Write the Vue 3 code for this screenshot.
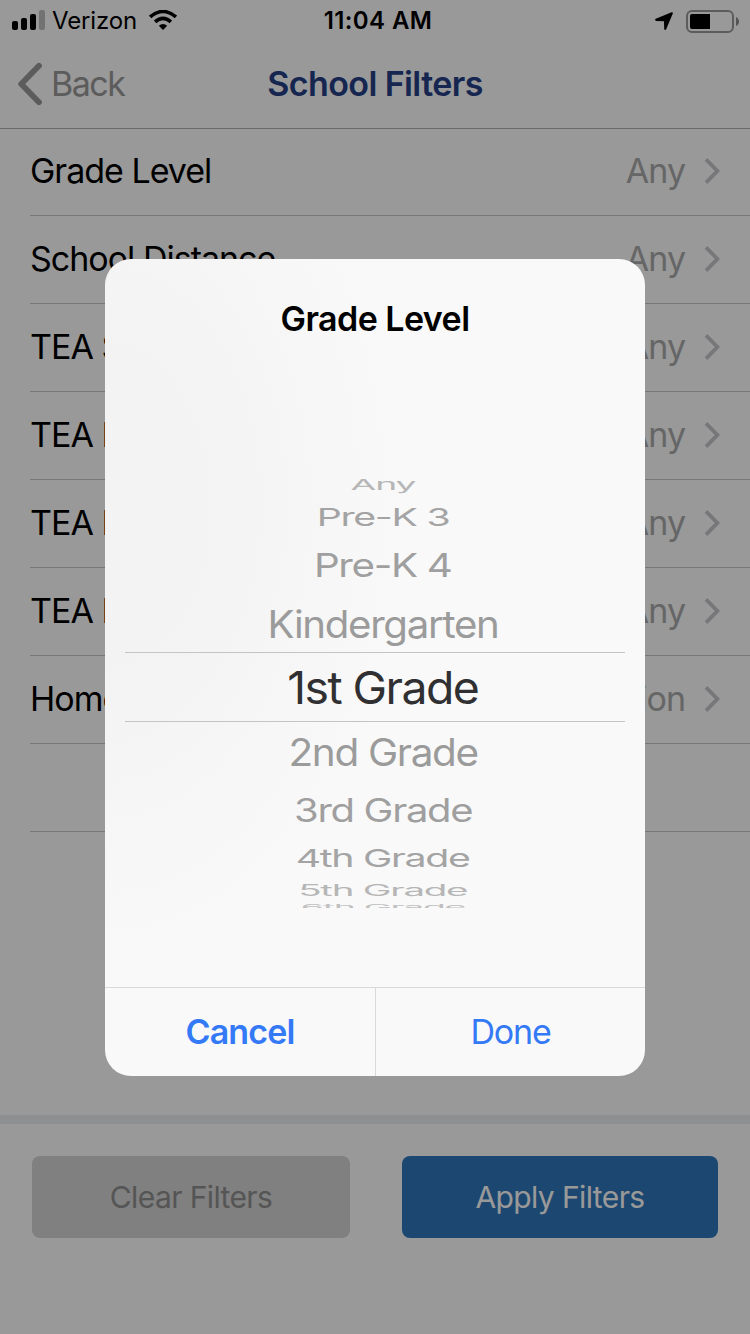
<template>
  <div class="screen">
    <header class="header">
      <div class="status-bar">
        <div class="status-left">
          <svg class="signal" width="33" height="20" viewBox="0 0 33 20">
            <rect x="0" y="11" width="6" height="9" rx="2" />
            <rect x="9" y="8" width="6" height="12" rx="2" />
            <rect x="18" y="4" width="6" height="16" rx="2" />
            <rect x="27" y="0" width="6" height="20" rx="2" fill="#bfbfbf" />
          </svg>
          <span class="carrier">Verizon</span>
          <svg class="wifi" width="28" height="20" viewBox="0 0 28 20">
            <path d="M14 20 L9.8 15.7 Q14 12.2 18.2 15.7 Z" />
            <path d="M6.1 11.9 Q14 4.9 21.9 11.9" fill="none" stroke="#000" stroke-width="3.5" />
            <path d="M1.1 7 Q14 -4 26.9 7" fill="none" stroke="#000" stroke-width="3.6" />
          </svg>
        </div>
        <span class="clock">11:04 AM</span>
        <div class="status-right">
          <svg width="18" height="18" viewBox="0 0 18 18">
            <path d="M16.6 0.2 Q18.2 0 17.8 1.5 L11.2 17.2 Q10.2 18.6 9.2 17.2 L9 9.2 L1 8.9 Q-0.8 7.8 0.8 6.8 Z" />
          </svg>
          <svg class="battery" width="54" height="23" viewBox="0 0 54 23">
            <rect x="1" y="1" width="46" height="21" rx="5" fill="none" stroke="#999" stroke-width="2" />
            <path d="M6 4 H24 V19 H6 Q4 19 4 17 V6 Q4 4 6 4 Z" />
            <path d="M50 7 Q53 8.5 53 11.5 Q53 14.5 50 16 Z" fill="#8c8c8c" />
          </svg>
        </div>
      </div>
      <nav class="nav-bar">
        <button class="back-button">
          <svg width="26" height="44" viewBox="0 0 26 44">
            <path d="M22 3.8 L4.2 22 L22 40.2" fill="none" stroke="currentColor" stroke-width="5.8" stroke-linecap="round" stroke-linejoin="round" />
          </svg>
          <span>Back</span>
        </button>
        <h1 class="nav-title"><span>School Filters</span></h1>
      </nav>
    </header>

    <ul class="filter-list">
      <li v-for="(filter, i) in filters" :key="i" class="filter-row">
        <template v-if="filter.label">
          <span class="filter-label">{{ filter.label }}</span>
          <span class="filter-value">{{ filter.value }}</span>
          <svg class="chevron" width="16" height="28" viewBox="0 0 16 28">
            <path d="M2 2.3 L13.4 14 L2 25.7" fill="none" stroke="#c7c7cc" stroke-width="3.8" />
          </svg>
        </template>
      </li>
    </ul>

    <footer class="actions">
      <button class="action clear"><span>Clear Filters</span></button>
      <button class="action apply"><span>Apply Filters</span></button>
    </footer>

    <div class="backdrop">
      <section class="dialog">
        <h2 class="dialog-title"><span>Grade Level</span></h2>
        <div class="picker">
          <div class="wheel">
            <div
              v-for="(grade, i) in grades"
              :key="grade.label"
              class="wheel-row"
              :class="{ selected: i === selected }"
              :style="{ height: grade.height + 'px' }"
            >
              <span :style="wheelStyle(grade)">{{ grade.label }}</span>
            </div>
          </div>
          <div class="selection"></div>
        </div>
        <div class="dialog-buttons">
          <button class="cancel"><span>Cancel</span></button>
          <button class="done"><span>Done</span></button>
        </div>
      </section>
    </div>
  </div>
</template>

<script setup>
import { ref } from 'vue';

const filters = [
  { label: 'Grade Level', value: 'Any' },
  { label: 'School Distance', value: 'Any' },
  { label: 'TEA School Rating', value: 'Any' },
  { label: 'TEA Distinctions', value: 'Any' },
  { label: 'TEA Recognition', value: 'Any' },
  { label: 'TEA Programs', value: 'Any' },
  { label: 'Home Address', value: 'Location' },
  {}
];

// Rows get flatter the further they are from the middle of the wheel
const grades = [
  { label: 'Any', height: 23.4, sx: 0.83, sy: 0.335, opacity: 0.7 },
  { label: 'Pre-K 3', height: 41, sx: 0.873, sy: 0.55, opacity: 0.9 },
  { label: 'Pre-K 4', height: 53.6, sx: 0.897, sy: 0.73, opacity: 0.95 },
  { label: 'Kindergarten', height: 64.2, sx: 0.895, sy: 0.85, opacity: 1 },
  { label: '1st Grade', height: 65, sx: 1.03, sy: 1, opacity: 1 },
  { label: '2nd Grade', height: 63.2, sx: 0.9, sy: 0.85, opacity: 1 },
  { label: '3rd Grade', height: 54, sx: 0.89, sy: 0.72, opacity: 0.95 },
  { label: '4th Grade', height: 41, sx: 0.873, sy: 0.55, opacity: 0.9 },
  { label: '5th Grade', height: 23.8, sx: 0.856, sy: 0.34, opacity: 0.7 },
  { label: '6th Grade', height: 11.6, sx: 0.83, sy: 0.18, opacity: 0.6 }
];

const selected = ref(4);

const wheelStyle = (grade) => ({
  transform: `scale(${grade.sx}, ${grade.sy})`,
  opacity: grade.opacity
});
</script>

<style>
body {
  margin: 0;
  background: #fff;
}
</style>

<style scoped>
.screen {
  position: relative;
  display: flex;
  flex-direction: column;
  width: 750px;
  height: 1334px;
  overflow: hidden;
  background: #fff;
  color: #000;
  font-family: Inter, "Liberation Sans", sans-serif;
  font-size: 34px;
  line-height: 1.2;
}

button {
  padding: 0;
  border: none;
  background: none;
  font: inherit;
  color: inherit;
}

span {
  white-space: nowrap;
}

.header {
  box-sizing: border-box;
  height: 129px;
  flex: none;
  border-bottom: 1px solid #b2b2b2;
}

.status-bar {
  display: grid;
  grid-template-columns: 312px 132px 1fr;
  align-items: center;
  height: 40px;
  font-size: 24px;
}

.status-left {
  display: flex;
  align-items: center;
  padding-left: 12px;
}

.carrier {
  width: 96px;
  padding-left: 7px;
  box-sizing: border-box;
  margin-top: 2px;
  letter-spacing: -0.15px;
}

.clock {
  text-align: center;
  font-weight: 600;
  margin-top: 2px;
  letter-spacing: 0.4px;
}

.wifi {
  margin-left: 8px;
}

.status-right {
  display: flex;
  justify-content: flex-end;
  align-items: center;
  gap: 13px;
  padding: 2px 10px 0 0;
}

.nav-bar {
  display: grid;
  grid-template-columns: 200px 350px 200px;
  align-items: center;
  height: 88px;
}

.back-button {
  display: flex;
  align-items: center;
  gap: 8px;
  padding-left: 17px;
  color: #999;
}

.back-button span {
  letter-spacing: -1.5px;
}

.nav-title {
  margin: 0;
  text-align: center;
  font-size: 34px;
  font-weight: 600;
  letter-spacing: -0.6px;
  color: #254085;
}

.filter-list {
  flex: 1;
  margin: -1px 0 0;
  padding: 0 0 0 30px;
  list-style: none;
}

.filter-row {
  box-sizing: border-box;
  display: flex;
  align-items: center;
  height: 88px;
  padding-right: 30px;
  border-bottom: 1px solid #c8c8c8;
}

.filter-label,
.filter-value {
  letter-spacing: -1px;
}

.filter-value {
  margin-left: auto;
  color: #aaa;
}

.chevron {
  margin-left: 19px;
  margin-bottom: 1px;
}

.actions {
  box-sizing: border-box;
  display: flex;
  justify-content: space-between;
  height: 219px;
  padding: 32px 32px 0;
  border-top: 9px solid #edeef0;
}

.action {
  height: 82px;
  border-radius: 8px;
  font-size: 30px;
  letter-spacing: -0.6px;
}

.clear {
  width: 318px;
  background: #d5d5d5;
  color: #8e8e8e;
}

.apply {
  width: 316px;
  background: #2f77bb;
  color: #fff;
}

/* Modal */
.backdrop {
  position: absolute;
  inset: 0;
  display: flex;
  justify-content: center;
  align-items: flex-start;
  padding-top: 259px;
  background: rgba(0, 0, 0, 0.4);
}

.dialog {
  display: flex;
  flex-direction: column;
  width: 540px;
  height: 817px;
  border-radius: 26px;
  overflow: hidden;
  background: radial-gradient(ellipse 300px 460px at 0 30%, #f3f3f3 35%, #f9f9f9 100%);
}

.dialog-title {
  box-sizing: border-box;
  margin: 0;
  padding-top: 40px;
  height: 214px;
  text-align: center;
  font-size: 34px;
  font-weight: 600;
  letter-spacing: -0.55px;
}

.picker {
  position: relative;
  flex: 1;
}

.wheel {
  height: 435px;
  overflow: hidden;
}

.wheel-row {
  display: flex;
  justify-content: center;
  align-items: center;
  padding-left: 16px;
  font-size: 45px;
  line-height: 1;
  letter-spacing: -1.5px;
  color: #9b9b9b;
}

.wheel-row.selected {
  color: #303032;
}

.selection {
  position: absolute;
  left: 20px;
  right: 20px;
  top: 179px;
  height: 68px;
  border-top: 1px solid #c4c4c4;
  border-bottom: 1px solid #c4c4c4;
}

.dialog-buttons {
  display: flex;
  height: 88px;
  border-top: 1px solid #d9d9dc;
  color: #347af6;
}

.dialog-buttons button {
  flex: 1;
}

.cancel {
  font-weight: 600;
  letter-spacing: -0.9px;
}

.dialog-buttons .done {
  flex: none;
  box-sizing: border-box;
  width: 270px;
  border-left: 1px solid #d9d9dc;
  letter-spacing: -1.2px;
}
</style>
